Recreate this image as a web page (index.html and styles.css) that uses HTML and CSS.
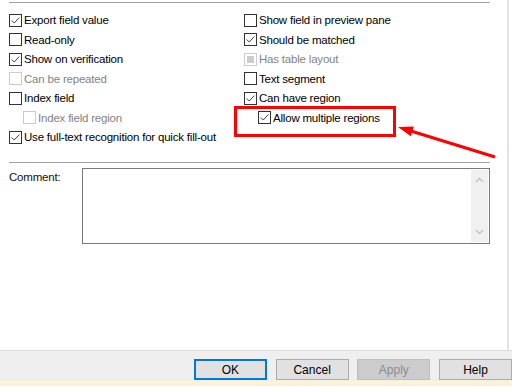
FILE: index.html
```html
<!DOCTYPE html>
<html lang="en">
<head>
    <meta charset="UTF-8">
    <title>Field properties</title>
    <link rel="stylesheet" href="styles.css">
</head>
<body>
    <div class="page">
        <div class="main">
            <div class="rule top-rule"></div>

            <div class="options">
                <label class="opt"><span class="box"><svg viewBox="0 0 13 13"><polyline points="2,6.5 5,9.5 11,3"/></svg></span>Export field value</label>
                <label class="opt"><span class="box"></span>Show field in preview pane</label>

                <label class="opt"><span class="box"></span>Read-only</label>
                <label class="opt"><span class="box"><svg viewBox="0 0 13 13"><polyline points="2,6.5 5,9.5 11,3"/></svg></span>Should be matched</label>

                <label class="opt"><span class="box"><svg viewBox="0 0 13 13"><polyline points="2,6.5 5,9.5 11,3"/></svg></span>Show on verification</label>
                <label class="opt disabled"><span class="box"><span class="mixed"></span></span>Has table layout</label>

                <label class="opt disabled"><span class="box"></span>Can be repeated</label>
                <label class="opt"><span class="box"></span>Text segment</label>

                <label class="opt"><span class="box"></span>Index field</label>
                <label class="opt"><span class="box"><svg viewBox="0 0 13 13"><polyline points="2,6.5 5,9.5 11,3"/></svg></span>Can have region</label>

                <label class="opt sub disabled"><span class="box"></span>Index field region</label>
                <label class="opt sub"><span class="box"><svg viewBox="0 0 13 13"><polyline points="2,6.5 5,9.5 11,3"/></svg></span>Allow multiple regions</label>

                <label class="opt wide"><span class="box"><svg viewBox="0 0 13 13"><polyline points="2,6.5 5,9.5 11,3"/></svg></span>Use full-text recognition for quick fill-out</label>
            </div>

            <div class="rule mid-rule"></div>

            <div class="comment-row">
                <div class="comment-label">Comment:</div>
                <div class="comment-box">
                    <div class="scrollbar">
                        <svg viewBox="0 0 17 72"><polyline points="5,12 8.5,8.5 12,12"/><polyline points="5,60 8.5,63.5 12,60"/></svg>
                    </div>
                </div>
            </div>
        </div>

        <footer class="buttons">
            <button class="btn default">OK</button>
            <button class="btn">Cancel</button>
            <button class="btn" disabled>Apply</button>
            <button class="btn">Help</button>
        </footer>
        <div class="strip"></div>

        <!-- annotation -->
        <div class="mark-box"></div>
        <svg class="arrow" width="512" height="387" viewBox="0 0 512 387">
            <line x1="495" y1="157" x2="406" y2="129.5"/>
            <polygon points="398,127 413.8,126.6 410.8,136.2"/>
        </svg>
    </div>
</body>
</html>
```

FILE: styles.css
```css
body{
    margin: 0;
    padding: 0;
    background-color: #fff;
    font-family: 'Liberation Sans', Arial, sans-serif;
    font-size: 11.5px;
    letter-spacing: -0.2px;
    color: #000;
}

.page{
    position: relative;
    width: 512px;
    height: 387px;
    overflow: hidden;
}

.main{
    height: 350px;
    width: 509px;
    border-right: 2px solid #e3e3e3;
    box-sizing: border-box;
    padding-top: 2px;
}

.rule{
    height: 1px;
    background-color: #a0a0a0;
    margin-left: 9px;
    width: 481px;
}

.options{
    display: grid;
    grid-template-columns: 235px 1fr;
    grid-auto-rows: 19.5px;
    margin-top: 7.5px;
    padding-left: 9px;
}

.opt{
    display: flex;
    align-items: center;
    white-space: nowrap;
}

.opt.sub{
    padding-left: 14px;
}

.opt.wide{
    grid-column: 1 / 3;
}

.box{
    width: 13px;
    height: 13px;
    box-sizing: border-box;
    border: 1px solid #333;
    background-color: #fff;
    margin-right: 2px;
    flex-shrink: 0;
    display: flex;
    align-items: center;
    justify-content: center;
}

.box svg{
    width: 11px;
    height: 11px;
}

.box polyline{
    fill: none;
    stroke: #333;
    stroke-width: 1.1;
}

.disabled{
    color: #838383;
}

.disabled .box{
    border-color: #cccccc;
}

.mixed{
    width: 7px;
    height: 7px;
    background-color: #cccccc;
}

.mid-rule{
    margin-top: 15px;
}

.comment-row{
    display: flex;
    margin-top: 5px;
    padding-left: 9px;
}

.comment-label{
    width: 73px;
    padding-top: 3px;
    color: #111;
}

.comment-box{
    width: 408px;
    height: 76px;
    box-sizing: border-box;
    border: 1px solid #7a7a7a;
    background-color: #fff;
    display: flex;
    justify-content: flex-end;
    padding: 1px;
}

.scrollbar{
    width: 17px;
    height: 72px;
    background-color: #f0f0f0;
}

.scrollbar svg{
    width: 17px;
    height: 72px;
    display: block;
}

.scrollbar polyline{
    fill: none;
    stroke: #c2c2c2;
    stroke-width: 1.3;
}

.buttons{
    height: 31px;
    border-top: 1px solid #dadada;
    background-color: #efefef;
    display: flex;
    justify-content: flex-end;
    align-items: flex-start;
    gap: 8.7px;
    padding-top: 8px;
    box-sizing: border-box;
}

.btn{
    width: 73px;
    height: 21px;
    font-family: inherit;
    font-size: 12px;
    color: #000;
    background-color: #e1e1e1;
    border: 1px solid #adadad;
    border-radius: 0;
    padding: 0;
}

.btn.default{
    border: 2px solid #0078d7;
}

.btn:disabled{
    background-color: #cccccc;
    border-color: #bfbfbf;
    color: #8d8d8d;
}

.strip{
    height: 5px;
    background-color: #fff2d6;
}

.mark-box{
    position: absolute;
    left: 234px;
    top: 106px;
    width: 162px;
    height: 31px;
    box-sizing: border-box;
    border: 3px solid #ff0000;
}

.arrow{
    position: absolute;
    left: 0;
    top: 0;
    pointer-events: none;
}

.arrow line{
    stroke: #ff0000;
    stroke-width: 3;
}

.arrow polygon{
    fill: #ff0000;
}
```
